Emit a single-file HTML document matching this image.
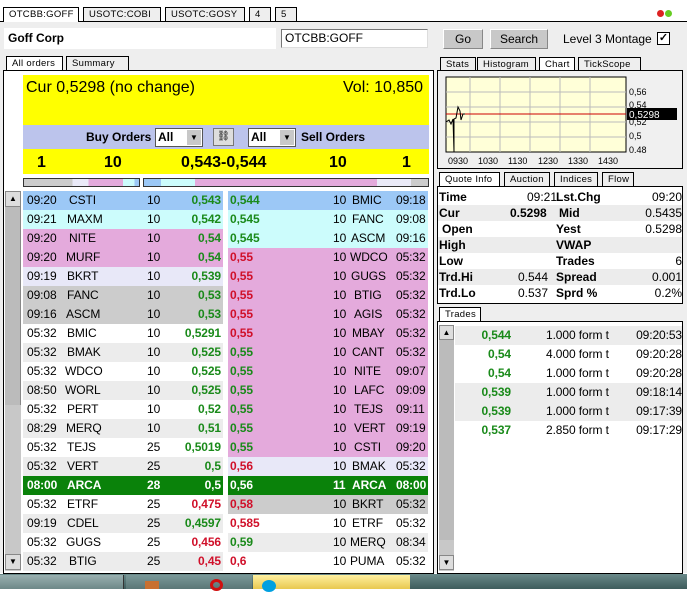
<!DOCTYPE html><html><head><style>
*{margin:0;padding:0;box-sizing:border-box}
body{width:687px;height:589px;background:#fff;font-family:"Liberation Sans",sans-serif;font-size:12px;color:#000;position:relative;overflow:hidden}
.a{position:absolute}
.tab{position:absolute;height:14px;border:1px solid #000;border-bottom:none;background:#eee;font-size:9.5px;letter-spacing:.3px;padding:1px 0 0 5px}
.tab.s{background:#fff}
.box{position:absolute;border:1px solid #000;background:#fff}
.row{position:absolute;height:19px;line-height:19px;font-size:12px;white-space:nowrap;letter-spacing:-0.1px}
.row span{position:absolute}
.g{color:#1a8a1a;font-weight:bold}.r{color:#d0102a;font-weight:bold}
.bl{background:#9cc8f6}.cy{background:#ccfcfc}.pk{background:#e4aadc}.lv{background:#e8e8f8}.gr{background:#cccccc}.wh{background:#fff}.ee{background:#ececec}.gn{background:#0a820a;color:#fff;font-weight:bold}
.gn .g,.gn .r{color:#fff}
.btn{position:absolute;background:#c8c8c8;border:1px solid #888;border-top-color:#fff;border-left-color:#fff;text-align:center;font-size:12px;line-height:18px}
.q{position:absolute;height:16px;line-height:16px;font-size:12px;width:244px;left:438px}
.q span{position:absolute}
.q b{position:absolute}
</style></head><body>
<div class="a" style="left:0;top:21px;width:687px;height:1px;background:#000"></div>
<div class="tab s" style="left:3px;top:7px;width:76px;height:15px">OTCBB:GOFF</div>
<div class="tab" style="left:83px;top:7px;width:78px">USOTC:COBI</div>
<div class="tab" style="left:165px;top:7px;width:80px">USOTC:GOSY</div>
<div class="tab" style="left:249px;top:7px;width:22px">4</div>
<div class="tab" style="left:275px;top:7px;width:22px">5</div>
<div class="a" style="left:657px;top:10px;width:7px;height:7px;border-radius:50%;background:#d22"></div>
<div class="a" style="left:665px;top:10px;width:7px;height:7px;border-radius:50%;background:#6c2"></div>
<div class="a" style="left:0;top:22px;width:687px;height:551px;background:#eeeeee"></div>
<div class="a" style="left:4px;top:28px;width:272px;height:21px;background:#fff;font-weight:bold;font-size:12px;line-height:21px;padding-left:4px">Goff Corp</div>
<div class="a" style="left:281px;top:29px;width:147px;height:19px;background:#fff;border:1px solid #777;border-right-color:#ddd;border-bottom-color:#ddd;line-height:17px;padding-left:3px">OTCBB:GOFF</div>
<div class="btn" style="left:443px;top:29px;width:40px;height:20px">Go</div>
<div class="btn" style="left:490px;top:29px;width:58px;height:20px">Search</div>
<div class="a" style="left:563px;top:32px;font-size:12px">Level 3 Montage</div>
<div class="a" style="left:657px;top:32px;width:13px;height:13px;border:1px solid #000;background:#fff;font-size:11px;line-height:11px;text-align:center;font-weight:bold">✓</div>
<div class="tab s" style="left:6px;top:56px;width:57px;height:15px">All orders</div>
<div class="tab" style="left:66px;top:56px;width:63px">Summary</div>
<div class="box" style="left:3px;top:70px;width:431px;height:504px"></div>
<div class="a" style="left:23px;top:75px;width:406px;height:50px;background:#ffff00"></div>
<div class="a" style="left:26px;top:79px;font-size:16px">Cur 0,5298 (no change)</div>
<div class="a" style="left:343px;top:79px;font-size:16px">Vol: 10,850</div>
<div class="a" style="left:23px;top:125px;width:406px;height:24px;background:#bcc4ec"></div>
<div class="a" style="left:86px;top:130px;font-weight:bold;font-size:12px">Buy Orders</div>
<div class="a" style="left:155px;top:128px;width:48px;height:19px;background:#fff;border:1px solid #555;font-weight:bold;padding-left:2px;line-height:17px">All<div class="a" style="right:1px;top:1px;width:14px;height:15px;background:#c8c8c8;font-size:8px;text-align:center;line-height:15px">▼</div></div>
<div class="a" style="left:213px;top:128px;width:21px;height:18px;background:#ddd;border:1px solid #777;font-size:10px;text-align:center;line-height:16px">⛓</div>
<div class="a" style="left:248px;top:128px;width:48px;height:19px;background:#fff;border:1px solid #555;font-weight:bold;padding-left:2px;line-height:17px">All<div class="a" style="right:1px;top:1px;width:14px;height:15px;background:#c8c8c8;font-size:8px;text-align:center;line-height:15px">▼</div></div>
<div class="a" style="left:301px;top:130px;font-weight:bold">Sell Orders</div>
<div class="a" style="left:23px;top:149px;width:406px;height:25px;background:#ffff00;font-size:16px;font-weight:bold"></div>
<div class="a" style="left:37px;top:154px;font-size:16px;font-weight:bold">1</div>
<div class="a" style="left:104px;top:154px;font-size:16px;font-weight:bold">10</div>
<div class="a" style="left:181px;top:154px;font-size:16px;font-weight:bold">0,543-0,544</div>
<div class="a" style="left:329px;top:154px;font-size:16px;font-weight:bold">10</div>
<div class="a" style="left:402px;top:154px;font-size:16px;font-weight:bold">1</div>
<div class="a" style="left:23px;top:178px;width:117px;height:9px;border:1px solid #333;background:linear-gradient(90deg,#ccc 0 42%,#eaeaf8 42% 56%,#e4aadc 56% 86%,#ccfcfc 86% 96%,#9cc8f6 96%)"></div>
<div class="a" style="left:143px;top:178px;width:286px;height:9px;border:1px solid #333;background:linear-gradient(90deg,#9cc8f6 0 6%,#ccfcfc 6% 18%,#e4aadc 18% 82%,#eaeaf8 82% 94%,#ccc 94%)"></div>
<div class="a" style="left:5px;top:191px;width:16px;height:380px;background:#c8c8c8"></div>
<div class="a" style="left:5px;top:191px;width:16px;height:16px;background:#ddd;border:1px solid #888;font-size:8px;text-align:center;line-height:14px">▲</div>
<div class="a" style="left:5px;top:207px;width:16px;height:198px;background:#bbb;border-right:1px solid #888"></div>
<div class="a" style="left:5px;top:554px;width:16px;height:16px;background:#ddd;border:1px solid #888;font-size:8px;text-align:center;line-height:14px">▼</div>

<div class="row bl" style="left:23px;top:191px;width:200px"><span style="left:4px">09:20</span><span style="left:46px">CSTI</span><span style="left:124px">10</span><span class="g" style="right:2px">0,543</span></div>
<div class="row cy" style="left:23px;top:210px;width:200px"><span style="left:4px">09:21</span><span style="left:44px">MAXM</span><span style="left:124px">10</span><span class="g" style="right:2px">0,542</span></div>
<div class="row pk" style="left:23px;top:229px;width:200px"><span style="left:4px">09:20</span><span style="left:46px">NITE</span><span style="left:124px">10</span><span class="g" style="right:2px">0,54</span></div>
<div class="row pk" style="left:23px;top:248px;width:200px"><span style="left:4px">09:20</span><span style="left:43px">MURF</span><span style="left:124px">10</span><span class="g" style="right:2px">0,54</span></div>
<div class="row lv" style="left:23px;top:267px;width:200px"><span style="left:4px">09:19</span><span style="left:44px">BKRT</span><span style="left:124px">10</span><span class="g" style="right:2px">0,539</span></div>
<div class="row gr" style="left:23px;top:286px;width:200px"><span style="left:4px">09:08</span><span style="left:44px">FANC</span><span style="left:124px">10</span><span class="g" style="right:2px">0,53</span></div>
<div class="row gr" style="left:23px;top:305px;width:200px"><span style="left:4px">09:16</span><span style="left:43px">ASCM</span><span style="left:124px">10</span><span class="g" style="right:2px">0,53</span></div>
<div class="row wh" style="left:23px;top:324px;width:200px"><span style="left:4px">05:32</span><span style="left:44px">BMIC</span><span style="left:124px">10</span><span class="g" style="right:2px">0,5291</span></div>
<div class="row ee" style="left:23px;top:343px;width:200px"><span style="left:4px">05:32</span><span style="left:44px">BMAK</span><span style="left:124px">10</span><span class="g" style="right:2px">0,525</span></div>
<div class="row wh" style="left:23px;top:362px;width:200px"><span style="left:4px">05:32</span><span style="left:42px">WDCO</span><span style="left:124px">10</span><span class="g" style="right:2px">0,525</span></div>
<div class="row ee" style="left:23px;top:381px;width:200px"><span style="left:4px">08:50</span><span style="left:42px">WORL</span><span style="left:124px">10</span><span class="g" style="right:2px">0,525</span></div>
<div class="row wh" style="left:23px;top:400px;width:200px"><span style="left:4px">05:32</span><span style="left:44px">PERT</span><span style="left:124px">10</span><span class="g" style="right:2px">0,52</span></div>
<div class="row ee" style="left:23px;top:419px;width:200px"><span style="left:4px">08:29</span><span style="left:43px">MERQ</span><span style="left:124px">10</span><span class="g" style="right:2px">0,51</span></div>
<div class="row wh" style="left:23px;top:438px;width:200px"><span style="left:4px">05:32</span><span style="left:44px">TEJS</span><span style="left:124px">25</span><span class="g" style="right:2px">0,5019</span></div>
<div class="row ee" style="left:23px;top:457px;width:200px"><span style="left:4px">05:32</span><span style="left:44px">VERT</span><span style="left:124px">25</span><span class="g" style="right:2px">0,5</span></div>
<div class="row gn" style="left:23px;top:476px;width:200px"><span style="left:4px">08:00</span><span style="left:44px">ARCA</span><span style="left:124px">28</span><span style="right:2px">0,5</span></div>
<div class="row wh" style="left:23px;top:495px;width:200px"><span style="left:4px">05:32</span><span style="left:44px">ETRF</span><span style="left:124px">25</span><span class="r" style="right:2px">0,475</span></div>
<div class="row ee" style="left:23px;top:514px;width:200px"><span style="left:4px">09:19</span><span style="left:44px">CDEL</span><span style="left:124px">25</span><span class="g" style="right:2px">0,4597</span></div>
<div class="row wh" style="left:23px;top:533px;width:200px"><span style="left:4px">05:32</span><span style="left:43px">GUGS</span><span style="left:124px">25</span><span class="r" style="right:2px">0,456</span></div>
<div class="row ee" style="left:23px;top:552px;width:200px"><span style="left:4px">05:32</span><span style="left:46px">BTIG</span><span style="left:124px">25</span><span class="r" style="right:2px">0,45</span></div>

<div class="row bl" style="left:228px;top:191px;width:200px"><span class="g" style="left:2px">0,544</span><span style="left:105px">10</span><span style="left:124px">BMIC</span><span style="left:168px">09:18</span></div>
<div class="row cy" style="left:228px;top:210px;width:200px"><span class="g" style="left:2px">0,545</span><span style="left:105px">10</span><span style="left:124px">FANC</span><span style="left:168px">09:08</span></div>
<div class="row cy" style="left:228px;top:229px;width:200px"><span class="g" style="left:2px">0,545</span><span style="left:105px">10</span><span style="left:123px">ASCM</span><span style="left:168px">09:16</span></div>
<div class="row pk" style="left:228px;top:248px;width:200px"><span class="r" style="left:2px">0,55</span><span style="left:105px">10</span><span style="left:122px">WDCO</span><span style="left:168px">05:32</span></div>
<div class="row pk" style="left:228px;top:267px;width:200px"><span class="r" style="left:2px">0,55</span><span style="left:105px">10</span><span style="left:123px">GUGS</span><span style="left:168px">05:32</span></div>
<div class="row pk" style="left:228px;top:286px;width:200px"><span class="r" style="left:2px">0,55</span><span style="left:105px">10</span><span style="left:126px">BTIG</span><span style="left:168px">05:32</span></div>
<div class="row pk" style="left:228px;top:305px;width:200px"><span class="r" style="left:2px">0,55</span><span style="left:105px">10</span><span style="left:126px">AGIS</span><span style="left:168px">05:32</span></div>
<div class="row pk" style="left:228px;top:324px;width:200px"><span class="r" style="left:2px">0,55</span><span style="left:105px">10</span><span style="left:124px">MBAY</span><span style="left:168px">05:32</span></div>
<div class="row pk" style="left:228px;top:343px;width:200px"><span class="g" style="left:2px">0,55</span><span style="left:105px">10</span><span style="left:124px">CANT</span><span style="left:168px">05:32</span></div>
<div class="row pk" style="left:228px;top:362px;width:200px"><span class="g" style="left:2px">0,55</span><span style="left:105px">10</span><span style="left:126px">NITE</span><span style="left:168px">09:07</span></div>
<div class="row pk" style="left:228px;top:381px;width:200px"><span class="g" style="left:2px">0,55</span><span style="left:105px">10</span><span style="left:126px">LAFC</span><span style="left:168px">09:09</span></div>
<div class="row pk" style="left:228px;top:400px;width:200px"><span class="g" style="left:2px">0,55</span><span style="left:105px">10</span><span style="left:126px">TEJS</span><span style="left:168px">09:11</span></div>
<div class="row pk" style="left:228px;top:419px;width:200px"><span class="g" style="left:2px">0,55</span><span style="left:105px">10</span><span style="left:126px">VERT</span><span style="left:168px">09:19</span></div>
<div class="row pk" style="left:228px;top:438px;width:200px"><span class="g" style="left:2px">0,55</span><span style="left:105px">10</span><span style="left:126px">CSTI</span><span style="left:168px">09:20</span></div>
<div class="row lv" style="left:228px;top:457px;width:200px"><span class="r" style="left:2px">0,56</span><span style="left:105px">10</span><span style="left:124px">BMAK</span><span style="left:168px">05:32</span></div>
<div class="row gn" style="left:228px;top:476px;width:200px"><span style="left:2px">0,56</span><span style="left:105px">11</span><span style="left:124px">ARCA</span><span style="left:168px">08:00</span></div>
<div class="row gr" style="left:228px;top:495px;width:200px"><span class="r" style="left:2px">0,58</span><span style="left:105px">10</span><span style="left:124px">BKRT</span><span style="left:168px">05:32</span></div>
<div class="row wh" style="left:228px;top:514px;width:200px"><span class="r" style="left:2px">0,585</span><span style="left:105px">10</span><span style="left:124px">ETRF</span><span style="left:168px">05:32</span></div>
<div class="row ee" style="left:228px;top:533px;width:200px"><span class="g" style="left:2px">0,59</span><span style="left:105px">10</span><span style="left:122px">MERQ</span><span style="left:168px">08:34</span></div>
<div class="row wh" style="left:228px;top:552px;width:200px"><span class="r" style="left:2px">0,6</span><span style="left:105px">10</span><span style="left:122px">PUMA</span><span style="left:168px">05:32</span></div>

<div class="tab" style="left:440px;top:57px;width:36px">Stats</div>
<div class="tab" style="left:477px;top:57px;width:59px">Histogram</div>
<div class="tab s" style="left:539px;top:57px;width:36px;height:14px">Chart</div>
<div class="tab" style="left:578px;top:57px;width:63px">TickScope</div>
<div class="box" style="left:437px;top:70px;width:246px;height:99px;background:#f0f0f0"></div>
<svg class="a" style="left:443px;top:75px" width="240" height="94">
<rect x="3" y="2" width="180" height="75" fill="#ffffd8" stroke="#000"/>
<g stroke="#bbb" stroke-width="1">
<line x1="27" y1="2" x2="27" y2="77"/><line x1="57" y1="2" x2="57" y2="77"/><line x1="87" y1="2" x2="87" y2="77"/><line x1="117" y1="2" x2="117" y2="77"/><line x1="147" y1="2" x2="147" y2="77"/>
<line x1="3" y1="17" x2="183" y2="17"/><line x1="3" y1="32" x2="183" y2="32"/><line x1="3" y1="47" x2="183" y2="47"/><line x1="3" y1="62" x2="183" y2="62"/></g>
<line x1="3" y1="39" x2="183" y2="39" stroke="#c00"/>
<polyline points="3,47 6,45 8,49 10,44 11,77 11,44 13,43 15,32 17,36 18,45 20,39 22,39" fill="none" stroke="#000"/>
<g font-size="9" font-family="Liberation Sans"><text x="186" y="20">0,56</text><text x="186" y="33">0,54</text><text x="186" y="50">0,52</text><text x="186" y="64">0,5</text><text x="186" y="78">0.48</text>
<text x="5" y="89">0930</text><text x="35" y="89">1030</text><text x="65" y="89">1130</text><text x="95" y="89">1230</text><text x="125" y="89">1330</text><text x="155" y="89">1430</text></g>
<rect x="184" y="33" width="50" height="12" fill="#000"/><text x="186" y="43" fill="#fff" font-size="10" font-family="Liberation Sans">0,5298</text>
</svg>
<div class="tab s" style="left:439px;top:172px;width:61px;height:15px">Quote Info</div>
<div class="tab" style="left:504px;top:172px;width:46px">Auction</div>
<div class="tab" style="left:554px;top:172px;width:44px">Indices</div>
<div class="tab" style="left:602px;top:172px;width:32px">Flow</div>
<div class="box" style="left:437px;top:186px;width:246px;height:118px"></div>
<div class="q" style="top:189px"><b style="left:1px">Time</b><span style="left:78px;width:41px;text-align:right">09:21</span><b style="left:118px">Lst.Chg</b><span style="right:0">09:20</span></div>
<div class="q ee" style="top:205px"><b style="left:1px">Cur</b><b style="left:72px">0.5298</b><b style="left:121px">Mid</b><span style="right:0">0.5435</span></div>
<div class="q" style="top:221px"><b style="left:4px">Open</b><b style="left:118px">Yest</b><span style="right:0">0.5298</span></div>
<div class="q ee" style="top:237px"><b style="left:1px">High</b><b style="left:118px">VWAP</b></div>
<div class="q" style="top:253px"><b style="left:1px">Low</b><b style="left:118px">Trades</b><span style="right:0">6</span></div>
<div class="q ee" style="top:269px"><b style="left:1px">Trd.Hi</b><span style="left:80px">0.544</span><b style="left:118px">Spread</b><span style="right:0">0.001</span></div>
<div class="q" style="top:285px"><b style="left:1px">Trd.Lo</b><span style="left:80px">0.537</span><b style="left:118px">Sprd %</b><span style="right:0">0.2%</span></div>
<div class="tab s" style="left:439px;top:307px;width:42px;height:15px">Trades</div>
<div class="box" style="left:437px;top:321px;width:246px;height:253px"></div>
<div class="a" style="left:439px;top:325px;width:15px;height:246px;background:#c8c8c8"></div>
<div class="a" style="left:439px;top:325px;width:15px;height:15px;background:#ddd;border:1px solid #888;font-size:8px;text-align:center;line-height:13px">▲</div>
<div class="a" style="left:439px;top:340px;width:15px;height:200px;background:#bbb"></div>
<div class="a" style="left:439px;top:555px;width:15px;height:15px;background:#ddd;border:1px solid #888;font-size:8px;text-align:center;line-height:13px">▼</div>
<div class="row ee" style="left:455px;top:326px;width:227px"><span class="g" style="right:171px">0,544</span><span style="left:91px">1.000 form t</span><span style="right:0">09:20:53</span></div>
<div class="row wh" style="left:455px;top:345px;width:227px"><span class="g" style="right:171px">0,54</span><span style="left:91px">4.000 form t</span><span style="right:0">09:20:28</span></div>
<div class="row wh" style="left:455px;top:364px;width:227px"><span class="g" style="right:171px">0,54</span><span style="left:91px">1.000 form t</span><span style="right:0">09:20:28</span></div>
<div class="row ee" style="left:455px;top:383px;width:227px"><span class="g" style="right:171px">0,539</span><span style="left:91px">1.000 form t</span><span style="right:0">09:18:14</span></div>
<div class="row ee" style="left:455px;top:402px;width:227px"><span class="g" style="right:171px">0,539</span><span style="left:91px">1.000 form t</span><span style="right:0">09:17:39</span></div>
<div class="row wh" style="left:455px;top:421px;width:227px"><span class="g" style="right:171px">0,537</span><span style="left:91px">2.850 form t</span><span style="right:0">09:17:29</span></div>
<div class="a" style="left:0;top:574px;width:687px;height:15px;background:linear-gradient(#6a8a8a,#3e5c5c)"></div>
<div class="a" style="left:0;top:575px;width:124px;height:14px;background:linear-gradient(#9ab0b0,#6d8888);border-right:1px solid #333"></div>
<div class="a" style="left:126px;top:575px;width:126px;height:14px;background:linear-gradient(#7a9898,#5a7676)"></div>
<div class="a" style="left:145px;top:581px;width:14px;height:8px;background:#c87030"></div>
<div class="a" style="left:210px;top:579px;width:13px;height:12px;border-radius:50%;border:3px solid #d01010"></div>
<div class="a" style="left:253px;top:575px;width:157px;height:14px;background:linear-gradient(#fff0a0,#e8c850)"></div>
<div class="a" style="left:262px;top:580px;width:14px;height:12px;border-radius:50%;background:#00a0e0"></div>
</body></html>
